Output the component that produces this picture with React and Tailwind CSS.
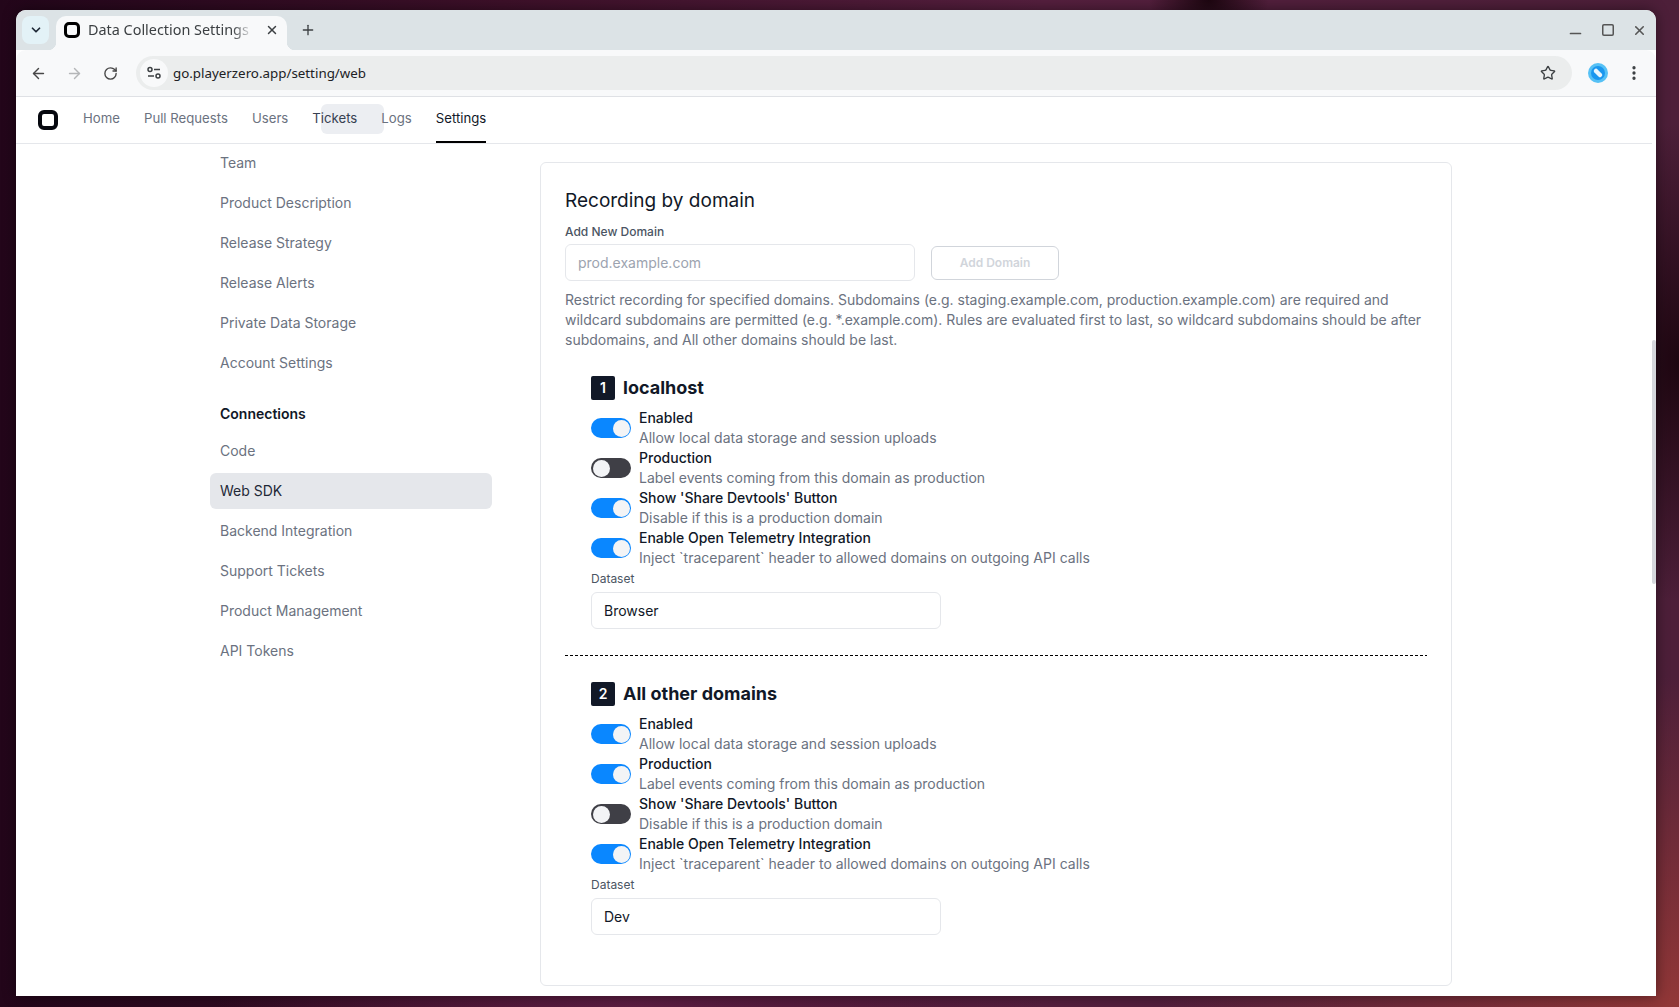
import React from 'react';
import { ArrowLeft, ArrowRight, ChevronDown, EllipsisVertical, Minus, Plus, RotateCw, Square, Star, X } from 'lucide-react';

const sidebarTop = ['Team', 'Product Description', 'Release Strategy', 'Release Alerts', 'Private Data Storage', 'Account Settings'];
const sidebarConnections = ['Code', 'Web SDK', 'Backend Integration', 'Support Tickets', 'Product Management', 'API Tokens'];

const rowText = [
    ['Enabled', 'Allow local data storage and session uploads'],
    ['Production', 'Label events coming from this domain as production'],
    ["Show 'Share Devtools' Button", 'Disable if this is a production domain'],
    ['Enable Open Telemetry Integration', 'Inject `traceparent` header to allowed domains on outgoing API calls'],
];

function Logo({ small }) {
    return <div className={small ? 'w-4 h-4 border-[3px] border-black rounded-[5px]' : 'w-5 h-5 border-[4px] border-[#06080f] rounded-[6px]'}></div>;
}

function Toggle({ on }) {
    return (
        <div className={`w-10 h-5 rounded-full p-[1.5px] flex shrink-0 ${on ? 'bg-[#0a87ff] justify-end' : 'bg-[#3f3f46] justify-start'}`}>
            <div className="w-[17px] h-[17px] rounded-full bg-[#f3f4f6]"></div>
        </div>
    );
}

function Domain({ num, name, flags, dataset }) {
    return (
        <div className="pl-[26px]">
            <div className="flex items-center gap-2 h-6">
                <div className="w-6 h-6 rounded-[2px] bg-[#111827] text-white text-sm font-semibold flex items-center justify-center">{num}</div>
                <div className="text-lg leading-6 font-bold text-[#111827]">{name}</div>
            </div>
            <div className="mt-2">
                {rowText.map((r, i) => (
                    <div key={r[0]} className="flex items-center gap-2 h-10">
                        <Toggle on={flags[i]} />
                        <div className="text-sm leading-5">
                            <div className="font-medium text-[#111827]">{r[0]}</div>
                            <div className="text-[#6b7280]">{r[1]}</div>
                        </div>
                    </div>
                ))}
            </div>
            <div className="mt-[3px] text-xs leading-4 text-[#4b5563]">Dataset</div>
            <div className="mt-[5px] w-[350px] h-[37px] border border-[#e5e7eb] rounded-md px-3 flex items-center text-sm text-[#111827]">{dataset}</div>
        </div>
    );
}

export default function App() {
    return (
        <div className="w-[1679px] h-[1007px] overflow-hidden pt-[10px] pl-[16px] font-['Inter',sans-serif] bg-[radial-gradient(520px_330px_at_100%_100%,#923737,transparent),radial-gradient(120px_240px_at_100%_36%,#1d0610,transparent),radial-gradient(420px_120px_at_38%_100%,#5c1d42,transparent),radial-gradient(60px_40px_at_72%_0%,#1d0610,transparent),linear-gradient(90deg,#23061a_0%,#3d1029_30%,#551f3e_62%,#4d1f39_100%)]">
            <div className="w-[1640px] h-[986px] rounded-t-[10px] overflow-hidden bg-white relative flex flex-col shadow-[0_0_14px_rgba(0,0,0,0.45)]">
                {/* Browser tab strip */}
                <div className="h-10 shrink-0 bg-[#dce3e6] relative font-['Noto_Sans',sans-serif]">
                    <div className="absolute left-[6px] top-[6px] w-[27px] h-7 rounded-lg bg-[#e3f2f7] flex items-center justify-center">
                        <ChevronDown size={14} strokeWidth={3} className="text-[#1f2937]" />
                    </div>
                    <div className="absolute left-[40px] top-[6px] w-[231px] h-[34px] bg-[#f8f9fa] rounded-t-[10px] flex items-center pl-2 pb-[6px]">
                        <Logo small />
                        <div className="ml-2 w-[172px] overflow-hidden whitespace-nowrap text-[14.4px] text-[#3c4043] [mask-image:linear-gradient(90deg,black_84%,transparent_96%)]">Data Collection Settings</div>
                        <X size={14} strokeWidth={2.5} className="ml-[5px] text-[#3c4043]" />
                        <div className="absolute -left-2 bottom-0 w-2 h-2 bg-[radial-gradient(circle_at_0_0,transparent_8px,#f8f9fa_8.5px)]"></div>
                        <div className="absolute -right-2 bottom-0 w-2 h-2 bg-[radial-gradient(circle_at_100%_0,transparent_8px,#f8f9fa_8.5px)]"></div>
                    </div>
                    <Plus size={16} strokeWidth={2} className="absolute left-[284px] top-3 text-[#3c4043]" />
                    <Minus size={17} strokeWidth={2.4} className="absolute left-[1551px] top-[15px] text-[#555]" />
                    <Square size={14} strokeWidth={2.6} className="absolute left-[1585px] top-[13px] text-[#555]" />
                    <X size={15} strokeWidth={2.5} className="absolute left-[1616px] top-[13px] text-[#555]" />
                </div>

                {/* Toolbar */}
                <div className="h-[47px] shrink-0 bg-[#f8f9fa] rounded-t-[10px] border-b border-[#dfe1e5] flex items-center pl-1 font-['Noto_Sans',sans-serif] relative">
                    <div className="w-9 flex justify-center"><ArrowLeft size={17} strokeWidth={2} className="text-[#474747]" /></div>
                    <div className="w-9 flex justify-center"><ArrowRight size={17} strokeWidth={2} className="text-[#b4b6b8]" /></div>
                    <div className="w-9 flex justify-center"><RotateCw size={15} strokeWidth={2.2} className="text-[#474747]" /></div>
                    <div className="ml-2 w-[1436px] h-[34px] rounded-full bg-[#ebeded] flex items-center pl-1">
                        <div className="w-[28px] h-[28px] rounded-full bg-[#f8f9fa] flex items-center justify-center">
                            <svg width="16" height="14" viewBox="0 0 16 14" fill="none" stroke="#3c4043" strokeWidth="1.5">
                                <circle cx="4" cy="3.5" r="2" />
                                <path d="M8 3.5h6M2 10h6" />
                                <circle cx="12" cy="10" r="2" />
                            </svg>
                        </div>
                        <div className="ml-[5px] text-[13.35px] text-[#202124]">go.playerzero.app/setting/web</div>
                        <Star size={16} strokeWidth={2} className="ml-auto mr-[16px] text-[#3c4043]" />
                    </div>
                    <svg className="ml-4" width="20" height="20" viewBox="0 0 20 20">
                        <circle cx="10" cy="10" r="10" fill="#56c1f5" />
                        <circle cx="10" cy="10" r="7" fill="#1a97ef" />
                        <path d="M8 8l4 4" stroke="#eaf6fd" strokeWidth="4.5" strokeLinecap="round" />
                    </svg>
                    <EllipsisVertical size={18} strokeWidth={2.4} className="ml-[17px] text-[#3c4043]" />
                </div>

                {/* App nav */}
                <div className="h-[47px] shrink-0 border-b border-[#e5e7eb] mr-1 flex pl-[22px] relative text-[13.2px]">
                    <div className="absolute left-[305px] top-[7px] w-[63px] h-[30px] rounded-md bg-[#eceef2]"></div>
                    <div className="flex items-center relative"><Logo /></div>
                    <div className="flex gap-6 ml-[25px] relative h-[46px]">
                        <div className="pt-3 text-[#6b7280]">Home</div>
                        <div className="pt-3 text-[#6b7280]">Pull Requests</div>
                        <div className="pt-3 text-[#6b7280]">Users</div>
                        <div className="pt-3 text-[#374151]">Tickets</div>
                        <div className="pt-3 text-[#6b7280]">Logs</div>
                        <div className="pt-3 text-[#111827] border-b-2 border-black">Settings</div>
                    </div>
                </div>

                {/* Page */}
                <div className="flex-1 flex pl-[194px] overflow-hidden text-sm">
                    <div className="w-[282px] shrink-0 pt-px text-[#6b7280]">
                        {sidebarTop.map(s => (
                            <div key={s} className="h-9 mb-1 px-2.5 flex items-center">{s}</div>
                        ))}
                        <div className="mt-[23px] px-2.5 h-5 leading-5 font-semibold text-[#111827]">Connections</div>
                        <div className="mt-[8.5px]">
                            {sidebarConnections.map(s => (
                                <div key={s} className={`h-9 mb-1 px-2.5 flex items-center rounded-md ${s === 'Web SDK' ? 'bg-[#e5e7eb] text-[#1f2937]' : ''}`}>{s}</div>
                            ))}
                        </div>
                    </div>

                    <div className="ml-[48px] mt-[18px] w-[912px] h-[824px] border border-[#e5e7eb] rounded-md px-6 pt-[24px] shrink-0">
                        <div className="text-[19px] leading-7 text-[#111827]">Recording by domain</div>
                        <div className="mt-[9px] text-xs leading-4 font-medium text-[#4b5563]">Add New Domain</div>
                        <div className="mt-1 flex items-center gap-4">
                            <div className="w-[350px] h-[37px] border border-[#e5e7eb] rounded-md px-3 flex items-center text-[#9ca3af]">prod.example.com</div>
                            <div className="w-[128px] h-[34px] border border-[#d1d5db] rounded-md flex items-center justify-center text-xs font-semibold text-[#d1d5db]">Add Domain</div>
                        </div>
                        <p className="mt-[9px] leading-5 text-[#6b7280]">
                            Restrict recording for specified domains. Subdomains (e.g. staging.example.com, production.example.com) are required and wildcard subdomains are permitted (e.g. *.example.com). Rules are evaluated first to last, so wildcard subdomains should be after subdomains, and All other domains should be last.
                        </p>
                        <div className="mt-[26px]">
                            <Domain num="1" name="localhost" flags={[true, false, true, true]} dataset="Browser" />
                        </div>
                        <div className="mt-[26px] h-px bg-[repeating-linear-gradient(90deg,black_0_3px,transparent_3px_5px)]"></div>
                        <div className="mt-[26px]">
                            <Domain num="2" name="All other domains" flags={[true, true, false, true]} dataset="Dev" />
                        </div>
                    </div>
                </div>

                {/* Scrollbar */}
                <div className="absolute right-0 top-[330px] w-1 h-[244px] rounded-full bg-[#d5d7dc]"></div>
            </div>
        </div>
    );
}
